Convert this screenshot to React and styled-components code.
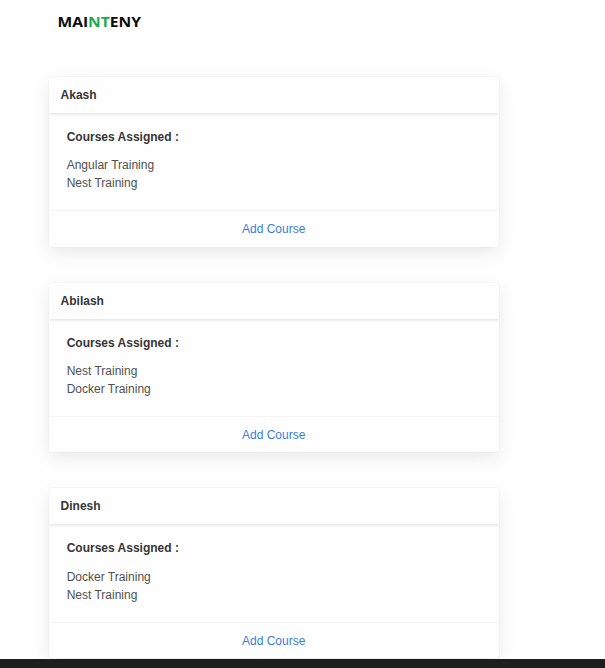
import React from "react";
import styled, { createGlobalStyle } from "styled-components";

const GlobalStyle = createGlobalStyle`
  html { font-size: 12px; }
  body {
    margin: 0;
    overflow: hidden;
    background: #fefefe;
    color: #505050;
    font-family: "Liberation Sans", Arial, sans-serif;
    font-size: 12px;
    line-height: 1.5;
  }
  *, *::before, *::after { box-sizing: border-box; }
`;

const Page = styled.div`
  display: flex;
  flex-direction: column;
  height: 668px;
  overflow: hidden;
`;

const Header = styled.header`
  flex: none;
  height: 77px;
  padding: 10px 0 0 57px;
`;

const Logo = styled.svg`
  display: block;
  width: 90px;
  height: 24px;
  font: 700 14px "Open Sans", sans-serif;
`;

const Content = styled.main`
  flex: 1;
  min-height: 0;
  overflow: hidden;
  margin-top: -20px;
  padding: 20px 0 0 49px;
`;

const Card = styled.section`
  width: 450px;
  height: 169.5px;
  margin-bottom: 36.2px;
  display: flex;
  flex-direction: column;
  overflow: hidden;
  border-radius: 3px;
  background: #fefefe;
  box-shadow: 0 6px 18px -1px rgba(10, 10, 10, 0.09), 0 0 0 1px rgba(10, 10, 10, 0.02);
`;

const CardHeader = styled.h2`
  margin: 0;
  padding: 9px 11.6px;
  color: #363636;
  font-size: 12px;
  line-height: 18px;
  font-weight: 700;
  box-shadow: 0 1.5px 3px rgba(10, 10, 10, 0.1);
`;

const CardBody = styled.div`
  flex: 1;
  padding: 18px 17.7px;
`;

const Heading = styled.h3`
  margin: 0 0 11.8px;
  color: #363636;
  font-size: 12px;
  line-height: 13.4px;
  font-weight: 700;
`;

const CourseList = styled.ul`
  margin: 0;
  padding: 0;
  list-style: none;
`;

const CardFooter = styled.footer`
  display: flex;
  justify-content: center;
  border-top: 1px solid #f5f5f5;
  padding: 9px 9.6px 8.4px 9px;
`;

const AddLink = styled.a`
  color: #3f7bde;
  line-height: 18px;
  cursor: pointer;
`;

const BottomBar = styled.div`
  flex: none;
  height: 9px;
  background: #1e1e1e;
`;

const people = [
  { name: "Akash", courses: ["Angular Training", "Nest Training"] },
  { name: "Abilash", courses: ["Nest Training", "Docker Training"] },
  { name: "Dinesh", courses: ["Docker Training", "Nest Training"] },
];

export default function App() {
  return (
    <Page>
      <GlobalStyle />
      <Header>
        <Logo viewBox="0 0 90 24" role="img" aria-label="Mainteny">
          <text x="0.5" y="17" textLength="83.5" lengthAdjust="spacingAndGlyphs" fill="#0a0a0a">
            MAI<tspan fill="#18ad50">NT</tspan>ENY
          </text>
        </Logo>
      </Header>
      <Content>
        {people.map((person) => (
          <Card key={person.name}>
            <CardHeader>{person.name}</CardHeader>
            <CardBody>
              <Heading>Courses Assigned :</Heading>
              <CourseList>
                {person.courses.map((course) => (
                  <li key={course}>{course}</li>
                ))}
              </CourseList>
            </CardBody>
            <CardFooter>
              <AddLink>Add Course</AddLink>
            </CardFooter>
          </Card>
        ))}
      </Content>
      <BottomBar />
    </Page>
  );
}
